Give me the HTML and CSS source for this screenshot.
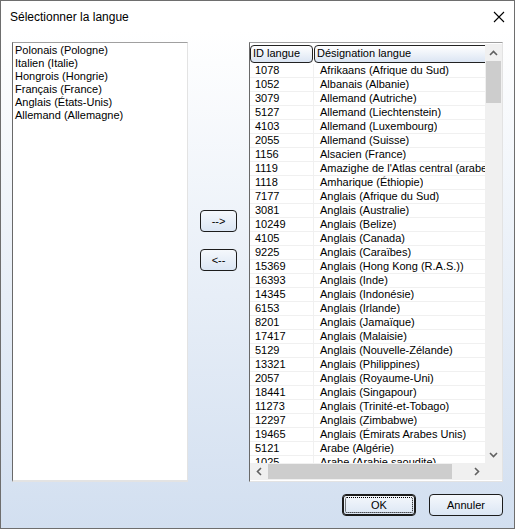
FILE: index.html
```html
<!DOCTYPE html>
<html lang="fr">
<head>
    <meta charset="UTF-8">
    <meta name="viewport" content="width=device-width, initial-scale=1.0">
    <title>Sélectionner la langue</title>
    <link rel="stylesheet" href="styles.css">
</head>
<body>
    <div class="fenetre">
        <div class="titre">
            <span>Sélectionner la langue</span>
            <svg class="fermer" width="12" height="12" viewBox="0 0 12 12">
                <path d="M1 1 L11 11 M11 1 L1 11" stroke="#000" stroke-width="1.1" fill="none"/>
            </svg>
        </div>

        <div class="contenu">
            <div class="zone">
                <div class="liste-choisies">
                    <div class="item">Polonais (Pologne)</div>
                    <div class="item">Italien (Italie)</div>
                    <div class="item">Hongrois (Hongrie)</div>
                    <div class="item">Français (France)</div>
                    <div class="item">Anglais (États-Unis)</div>
                    <div class="item">Allemand (Allemagne)</div>
                </div>

                <div class="fleches">
                    <button class="btn btn-petit">--&gt;</button>
                    <button class="btn btn-petit">&lt;--</button>
                </div>

                <div class="liste-langues">
                    <div class="vue">
                        <div class="entete">
                            <div class="col-id">ID langue</div>
                            <div class="col-nom">Désignation langue</div>
                        </div>
                        <div class="ligne"><div class="col-id">1078</div><div class="col-nom">Afrikaans (Afrique du Sud)</div></div>
                        <div class="ligne"><div class="col-id">1052</div><div class="col-nom">Albanais (Albanie)</div></div>
                        <div class="ligne"><div class="col-id">3079</div><div class="col-nom">Allemand (Autriche)</div></div>
                        <div class="ligne"><div class="col-id">5127</div><div class="col-nom">Allemand (Liechtenstein)</div></div>
                        <div class="ligne"><div class="col-id">4103</div><div class="col-nom">Allemand (Luxembourg)</div></div>
                        <div class="ligne"><div class="col-id">2055</div><div class="col-nom">Allemand (Suisse)</div></div>
                        <div class="ligne"><div class="col-id">1156</div><div class="col-nom">Alsacien (France)</div></div>
                        <div class="ligne"><div class="col-id">1119</div><div class="col-nom">Amazighe de l'Atlas central (arabe, Maroc)</div></div>
                        <div class="ligne"><div class="col-id">1118</div><div class="col-nom">Amharique (Éthiopie)</div></div>
                        <div class="ligne"><div class="col-id">7177</div><div class="col-nom">Anglais (Afrique du Sud)</div></div>
                        <div class="ligne"><div class="col-id">3081</div><div class="col-nom">Anglais (Australie)</div></div>
                        <div class="ligne"><div class="col-id">10249</div><div class="col-nom">Anglais (Belize)</div></div>
                        <div class="ligne"><div class="col-id">4105</div><div class="col-nom">Anglais (Canada)</div></div>
                        <div class="ligne"><div class="col-id">9225</div><div class="col-nom">Anglais (Caraïbes)</div></div>
                        <div class="ligne"><div class="col-id">15369</div><div class="col-nom">Anglais (Hong Kong (R.A.S.))</div></div>
                        <div class="ligne"><div class="col-id">16393</div><div class="col-nom">Anglais (Inde)</div></div>
                        <div class="ligne"><div class="col-id">14345</div><div class="col-nom">Anglais (Indonésie)</div></div>
                        <div class="ligne"><div class="col-id">6153</div><div class="col-nom">Anglais (Irlande)</div></div>
                        <div class="ligne"><div class="col-id">8201</div><div class="col-nom">Anglais (Jamaïque)</div></div>
                        <div class="ligne"><div class="col-id">17417</div><div class="col-nom">Anglais (Malaisie)</div></div>
                        <div class="ligne"><div class="col-id">5129</div><div class="col-nom">Anglais (Nouvelle-Zélande)</div></div>
                        <div class="ligne"><div class="col-id">13321</div><div class="col-nom">Anglais (Philippines)</div></div>
                        <div class="ligne"><div class="col-id">2057</div><div class="col-nom">Anglais (Royaume-Uni)</div></div>
                        <div class="ligne"><div class="col-id">18441</div><div class="col-nom">Anglais (Singapour)</div></div>
                        <div class="ligne"><div class="col-id">11273</div><div class="col-nom">Anglais (Trinité-et-Tobago)</div></div>
                        <div class="ligne"><div class="col-id">12297</div><div class="col-nom">Anglais (Zimbabwe)</div></div>
                        <div class="ligne"><div class="col-id">19465</div><div class="col-nom">Anglais (Émirats Arabes Unis)</div></div>
                        <div class="ligne"><div class="col-id">5121</div><div class="col-nom">Arabe (Algérie)</div></div>
                        <div class="ligne"><div class="col-id">1025</div><div class="col-nom">Arabe (Arabie saoudite)</div></div>
                    </div>

                    <div class="vscroll">
                        <div class="fleche">
                            <svg width="9" height="6" viewBox="0 0 9 6"><path d="M1 5 L4.5 1.5 L8 5" stroke="#606060" stroke-width="1.6" fill="none"/></svg>
                        </div>
                        <div class="piste"><div class="pouce-v"></div></div>
                        <div class="fleche">
                            <svg width="9" height="6" viewBox="0 0 9 6"><path d="M1 1 L4.5 4.5 L8 1" stroke="#606060" stroke-width="1.6" fill="none"/></svg>
                        </div>
                    </div>

                    <div class="hscroll">
                        <div class="fleche">
                            <svg width="6" height="9" viewBox="0 0 6 9"><path d="M5 1 L1.5 4.5 L5 8" stroke="#606060" stroke-width="1.6" fill="none"/></svg>
                        </div>
                        <div class="piste-h"><div class="pouce-h"></div></div>
                        <div class="fleche">
                            <svg width="6" height="9" viewBox="0 0 6 9"><path d="M1 1 L4.5 4.5 L1 8" stroke="#606060" stroke-width="1.6" fill="none"/></svg>
                        </div>
                    </div>

                    <div class="coin"></div>
                </div>
            </div>

            <div class="pied">
                <button class="btn btn-bas btn-defaut"><span>OK</span></button>
                <button class="btn btn-bas">Annuler</button>
            </div>
        </div>
    </div>
</body>
</html>
```

FILE: styles.css
```css
* {
    box-sizing: border-box;
}

body {
    margin: 0;
    font-family: "Liberation Sans", Arial, sans-serif;
    font-size: 11px;
    color: #000;
}

.fenetre {
    width: 515px;
    height: 529px;
    border: 1px solid #6e6e6e;
    display: flex;
    flex-direction: column;
    background: #fff;
}

.titre {
    height: 30px;
    flex-shrink: 0;
    display: flex;
    align-items: center;
    justify-content: space-between;
    padding: 1px 9px 0 9px;
    font-size: 12px;
    background: #fff;
}

.contenu {
    flex: 1;
    min-height: 0;
    display: flex;
    flex-direction: column;
    padding: 11px 11px 12px 11px;
    background: linear-gradient(#ffffff, #d2dff0);
}

.zone {
    flex: 1;
    min-height: 0;
    display: flex;
}

.liste-choisies {
    width: 176px;
    background: #fff;
    border-top: 1px solid #a0a0a0;
    border-left: 1px solid #696969;
    border-right: 1px solid #e3e3e3;
    border-bottom: 2px solid #e3e3e3;
    padding: 1px 2px;
}

.item {
    height: 13px;
    line-height: 13px;
    white-space: nowrap;
}

.fleches {
    width: 61px;
    display: flex;
    flex-direction: column;
    align-items: flex-start;
    padding: 168px 0 0 12px;
    gap: 17px;
}

.btn {
    font-family: "Liberation Sans", Arial, sans-serif;
    font-size: 11px;
    color: #000;
    border: 1px solid #1c1c1c;
    border-radius: 4px;
    background: linear-gradient(#f5f8fc, #dbe6f4);
    padding: 0;
}

.btn-petit {
    width: 37px;
    height: 22px;
}

.liste-langues {
    width: 254px;
    border-top: 1px solid #a0a0a0;
    border-left: 1px solid #696969;
    border-right: 1px solid #e3e3e3;
    border-bottom: 1px solid #e3e3e3;
    background: #fff;
    display: grid;
    grid-template-columns: minmax(0, 1fr) 17px;
    grid-template-rows: minmax(0, 1fr) 17px;
    padding: 1px 0 1px 0;
}

.vue {
    overflow: hidden;
    min-height: 0;
    background: #fff;
    padding-top: 1px;
}

.entete {
    display: flex;
    height: 19px;
    padding-bottom: 1px;
    white-space: nowrap;
}

.entete div {
    border: 1px solid #222;
    border-radius: 4px;
    background: linear-gradient(#ffffff, #dbe5f3);
    line-height: 15px;
    padding-left: 2px;
    flex-shrink: 0;
}

.entete .col-id {
    width: 63px;
    margin-right: 1px;
}

.entete .col-nom {
    width: 190px;
}

.ligne {
    display: flex;
    height: 14px;
    line-height: 13px;
    border-bottom: 1px solid #f0f0f0;
    white-space: nowrap;
}

.ligne .col-id {
    width: 64px;
    padding-left: 5px;
    border-right: 1px solid #f0f0f0;
    flex-shrink: 0;
}

.ligne .col-nom {
    padding-left: 6px;
    overflow: hidden;
}

.vscroll {
    background: #f0f0f0;
    display: flex;
    flex-direction: column;
    min-height: 0;
}

.fleche {
    width: 17px;
    height: 17px;
    display: flex;
    align-items: center;
    justify-content: center;
    flex-shrink: 0;
}

.piste {
    flex: 1;
    padding: 0 1px;
}

.pouce-v {
    height: 42px;
    background: #cdcdcd;
}

.hscroll {
    background: #f0f0f0;
    display: flex;
}

.piste-h {
    flex: 1;
    padding: 1px 0;
}

.pouce-h {
    width: 184px;
    height: 100%;
    margin-left: 1px;
    background: #cdcdcd;
}

.coin {
    background: #f0f0f0;
}

.pied {
    display: flex;
    justify-content: flex-end;
    gap: 13px;
    padding-top: 12px;
}

.btn-bas {
    width: 74px;
    height: 22px;
}

.btn-defaut {
    box-shadow: inset 0 0 0 1px #1c1c1c;
    position: relative;
}

.btn-defaut span {
    display: flex;
    align-items: center;
    justify-content: center;
    position: absolute;
    inset: 2px;
    border: 1px dotted #000;
    border-radius: 2px;
}
```
